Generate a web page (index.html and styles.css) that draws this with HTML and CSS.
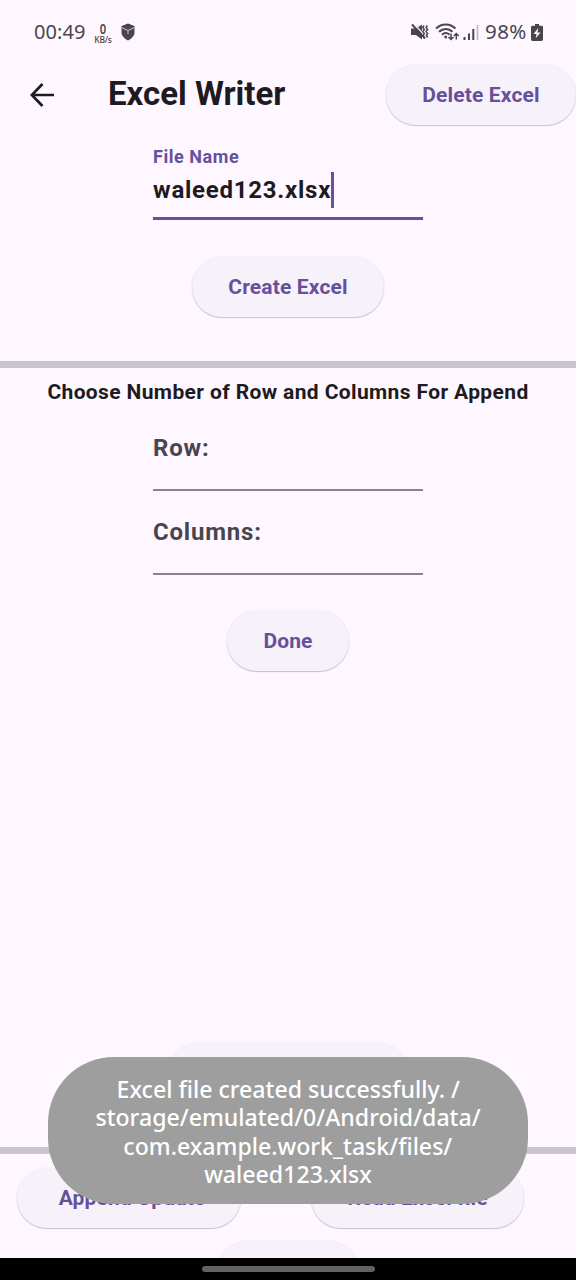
FILE: index.html
```html
<!DOCTYPE html>
<html lang="en">
<head>
<meta charset="utf-8">
<title>Excel Writer</title>
<link rel="stylesheet" href="styles.css">
</head>
<body>
<div class="screen">
  <header class="status">
    <span class="clock">00:49</span>
    <span class="speed"><b>0</b><small>KB/s</small></span>
    <svg class="shield" width="14" height="18" viewBox="0 0 14 18"><path fill="#49454b" d="M7 .5 13.500 3v6.500c0 3.600-3 6-6.500 8-3.500-2-6.500-4.400-6.500-8V3z"/><path d="M.5 4.500 7 7.500l6.500-3M7 7.500v3.500" stroke="#d9d3db" stroke-width=".9" fill="none"/></svg>
    <span class="spacer"></span>
    <svg class="mute" width="18" height="18" viewBox="0 0 18 18"><path fill="#49454b" d="M0 5.500h5l6-4v15l-6-4.500H0z"/><path d="m3 1 13 14" stroke="#fef7ff" stroke-width="1.200"/><path d="m1 1.500 13 14" stroke="#49454b" stroke-width="1.900"/><path d="m13 2.500-1.200 2 1.500 2-1.500 2 1.500 2-1.200 2 1.200 2M16.300 2.500l-1.200 2 1.500 2-1.500 2 1.500 2-1.200 2 1.200 2" fill="none" stroke="#49454b" stroke-width="1.500"/></svg>
    <svg class="wifi" width="25" height="20" viewBox="0 0 25 20"><g fill="none" stroke="#49454b" stroke-width="2"><path d="M1 6.500C6.500 1 15 1 20.500 6.500M4 9.800c4-3.800 9.500-3.800 13.500 0M7 12.800c2.500-2.300 5-2.300 7.500 0"/><path stroke-width="1.500" d="M16 11.500v6m-2.500-2.500 2.500 2.500 2.500-2.500M21.300 17.500v-6m-2.500 2.500 2.500-2.500 2.500 2.500"/></g><circle cx="10.700" cy="15" r="1.500" fill="#49454b"/></svg>
    <svg class="signal" width="16" height="17" viewBox="0 0 16 17"><path d="M1.500 13v3M6 9.500V16M10.300 5v11" stroke="#49454b" stroke-width="2"/><path d="M14.500 1v15" stroke="#bdb7c0" stroke-width="1.600"/></svg>
    <span class="percent">98%</span>
    <svg class="battery" width="12" height="17" viewBox="0 0 12 17"><path fill="#49454b" d="M4 0h4v1.700h2.500c.8 0 1.500.7 1.500 1.500v12c0 1-.8 1.800-1.800 1.800H1.800C.8 17 0 16.200 0 15.200v-12c0-.8.700-1.500 1.500-1.500H4z"/><path fill="#fef7ff" d="M7.300 4 2.500 10h3l-.8 4.200L9.500 8.500h-3z"/></svg>
  </header>
  <div class="appbar">
    <svg class="back" width="24" height="24" viewBox="0 0 24 24"><path d="M24 12H2M12.500 1 1.800 12l10.700 11" fill="none" stroke="#1d1b20" stroke-width="2.700"/></svg>
    <h1 class="title">Excel Writer</h1>
    <button class="btn delete">Delete Excel</button>
  </div>
  <main class="content">
    <div class="field filename">
      <label class="label">File Name</label>
      <div class="value"><span class="name">waleed123.xlsx</span><i class="caret"></i></div>
    </div>
    <button class="btn create">Create Excel</button>
    <hr class="divider">
    <h2 class="heading">Choose Number of Row and Columns For Append</h2>
    <div class="field empty row"><span class="hint">Row:</span></div>
    <div class="field empty"><span class="hint">Columns:</span></div>
    <button class="btn done">Done</button>
    <div class="btn hidden-action"></div>
    <hr class="divider lower">
    <div class="actions">
      <button class="btn append">Append Update</button>
      <button class="btn read">Read Excel file</button>
    </div>
    <div class="btn last-action"></div>
  </main>
  <nav class="navbar"><i class="handle"></i></nav>
  <div class="toast">
    <span class="line">Excel file created successfully. /</span>
    <span class="line">storage/emulated/0/Android/data/</span>
    <span class="line">com.example.work_task/files/</span>
    <span class="line">waleed123.xlsx</span>
  </div>
</div>
</body>
</html>
```
FILE: styles.css
```css
* { box-sizing: border-box; }
body { margin: 0; background: #fef7ff; font-family: Roboto, sans-serif; color: #1d1b20; }
.screen { position: relative; width: 576px; height: 1280px; overflow: hidden; display: flex; flex-direction: column; }
.status { height: 64px; flex: none; display: flex; align-items: center; padding: 0 33px 0 34px; color: #49454b; font-family: "Noto Sans", sans-serif; }
.clock { width: 52px; font-size: 20px; letter-spacing: .1px; white-space: nowrap; margin-top: -2px; }
.speed { width: 20px; margin: 1px 0 0 7px; display: flex; flex-direction: column; align-items: center; }
.speed b { font-size: 14px; line-height: 13px; font-weight: 600; transform: scaleX(.8); }
.speed small { font-size: 8.500px; line-height: 9px; letter-spacing: -.2px; font-weight: 500; }
.shield { margin-left: 8px; }
.spacer { flex: 1; }
.wifi { margin-left: 6px; }
.signal { margin-left: 3px; }
.percent { width: 43px; margin: -2px 0 0 6px; font-size: 20.500px; letter-spacing: .4px; white-space: nowrap; }
.battery { margin-left: 3px; }
.appbar { height: 61px; flex: none; display: flex; align-items: center; padding-left: 30px; }
.back { flex: none; }
.title { margin: 0 0 1px 54px; width: 278px; font-size: 33px; line-height: 40px; font-weight: 700; white-space: nowrap; }
.btn { height: 60px; flex: none; padding: 0; border: 0; border-radius: 30px; background: #f7f2fa; color: #65509c; font: 700 21px/60px Roboto, sans-serif; letter-spacing: .15px; text-align: center; white-space: nowrap; box-shadow: 0 1px 1px rgba(0,0,0,.2), 0 0 2px rgba(0,0,0,.09); }
.delete { width: 190px; }
.content { height: 1133px; flex: none; overflow: hidden; display: flex; flex-direction: column; align-items: center; }
.field { width: 270px; flex: none; }
.filename { height: 95px; padding-top: 21px; border-bottom: 3px solid #65509c; display: flex; flex-direction: column; }
.label { color: #65509c; font-size: 18px; line-height: 22px; font-weight: 700; letter-spacing: .55px; }
.value { display: flex; align-items: center; height: 44px; }
.name { font-size: 24px; font-weight: 700; letter-spacing: .75px; }
.caret { width: 3px; height: 36px; background: #65509c; }
.create { width: 192px; margin-top: 37px; }
.divider { width: 100%; height: 7px; flex: none; margin: 44px 0 0; border: 0; background: #cac4d0; }
.heading { margin: 11px 0 0; font-size: 21px; line-height: 26px; font-weight: 700; white-space: nowrap; letter-spacing: .37px; }
.empty { height: 84px; padding-top: 25px; border-bottom: 2px solid #8b8490; }
.row { height: 86px; padding-top: 27px; }
.hint { display: block; color: #49454f; font-size: 24px; line-height: 32px; font-weight: 700; letter-spacing: .8px; }
.done { width: 122px; margin-top: 36px; }
.hidden-action { width: 240px; margin-top: 372px; }
.lower { margin-top: 44px; }
.actions { width: 507px; margin: 14px 0 0 -35px; flex: none; display: flex; justify-content: space-between; align-self: center; }
.append { width: 224px; padding-left: 6px; }
.read { width: 213px; }
.last-action { width: 140px; margin-top: 13px; }
.navbar { height: 22px; flex: none; background: #000; display: flex; justify-content: center; align-items: center; }
.handle { width: 173px; height: 6px; border-radius: 3px; background: #626262; }
.toast { position: absolute; left: 48px; top: 1057px; width: 480px; height: 147px; padding: 18px 0; border-radius: 66px; background: #9e9e9e; color: #fff; font: 500 24px/28.300px "Noto Sans", sans-serif; display: flex; flex-direction: column; align-items: center; }
.line { white-space: nowrap; transform: scaleX(.963); }
```
